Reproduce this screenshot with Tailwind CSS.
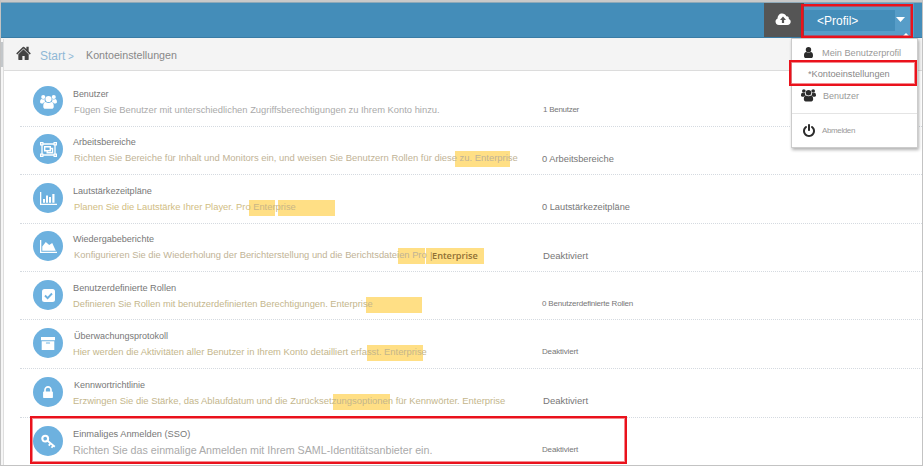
<!DOCTYPE html>
<html lang="de">
<head>
<meta charset="utf-8">
<title>Kontoeinstellungen</title>
<script src="https://cdn.jsdelivr.net/npm/@tailwindcss/browser@4"></script>
</head>
<body class="bg-white font-['Liberation_Sans',Arial,sans-serif]">
<svg class="hidden">
  <symbol id="users" viewBox="0 0 18 16">
    <circle cx="3.4" cy="3.2" r="2.2"/><circle cx="14.6" cy="3.2" r="2.2"/>
    <path d="M0 8.6C0 6 .8 5.2 2 5.2c1 .7 2 .7 3 .2C4.600 6.600 5 7.900 5.600 8.600 4.500 8.700 3.700 9.300 3.200 10H1.500C.5 10 0 9.500 0 8.600zM18 8.600c0-2.600-.8-3.400-2-3.400-1 .7-2 .7-3 .2.4 1.200 0 2.500-.6 3.200 1.100.1 1.900.7 2.400 1.400h1.700c1 0 1.500-.5 1.500-1.400z"/>
    <circle cx="9" cy="5.300" r="3.300"/>
    <path d="M3.400 13.200c0-2.700.8-4.600 2.600-4.600 1.700 1.300 4.300 1.300 6 0 1.800 0 2.600 1.900 2.600 4.600 0 1.500-.9 2.500-2.200 2.500H5.600c-1.300 0-2.200-1-2.200-2.500z"/>
  </symbol>
</svg>
<div class="relative flex h-[466px] w-[923px] flex-col overflow-hidden border border-t-0 border-[#c3c3c3]">
  <div class="h-[3px] shrink-0 border-b border-[#8fa9b8] bg-[#c9c9c9]"></div>
  <header class="flex h-[35px] shrink-0 justify-end border-b border-[#3a7ca5] bg-[#448db9]">
    <div class="flex w-[40px] justify-center bg-[#555] pt-[9px] pr-[2px]">
      <svg class="h-[14px] w-[16px]" viewBox="0 0 16 14"><path fill="#fff" d="M4 13C1.800 13 .5 11.500.5 9.600c0-1.500.9-2.600 2.100-3.100C2.500 3.600 4.500 1.500 7.100 1.500c2 0 3.500 1.100 4.200 2.700 1.700-.3 2.900.9 2.500 2.700 1.200.4 1.900 1.500 1.900 2.800 0 1.900-1.400 3.300-3.200 3.300z"/><path fill="#555" d="M8 4.600l3 3.300H9.100v3H6.900v-3H5z"/></svg>
    </div>
    <div class="flex w-[110px] items-start bg-[#579dc8]">
      <div class="mt-[7px] h-[21px] w-[91px] bg-[#448db9] pl-[13px] text-[12px] leading-[23px] whitespace-nowrap text-white">&lt;Profil&gt;</div>
      <svg class="mt-[14px] ml-[1px] h-[5px] w-[9px] fill-white" viewBox="0 0 9 5"><path d="M0 0h9L4.500 5z"/></svg>
    </div>
    <div class="w-[8px]"></div>
  </header>
  <nav class="flex h-[33px] shrink-0 items-center border-b border-[#dcdcdc] bg-[#f4f4f4] pl-[15px] whitespace-nowrap">
    <svg class="mb-[2px] h-[14px] w-[15px] fill-[#444]" viewBox="60 190 1670 1350" preserveAspectRatio="none"><path d="M1472 992v480q0 26-19 45t-45 19h-384v-384h-256v384h-384q-26 0-45-19t-19-45v-480q0-1 .5-3t.5-3l575-474 575 474q1 2 1 6zm223-69l-62 74q-8 9-21 11h-3q-13 0-21-7l-692-577-692 577q-12 8-24 7-13-2-21-11l-62-74q-8-10-7-23.500t11-21.500l719-599q32-26 76-26t76 26l244 204v-195q0-14 9-23t23-9h192q14 0 23 9t9 23v408l219 182q10 8 11 21.500t-7 23.500z"/></svg>
    <span class="mt-[4px] ml-[9px] w-[28px] text-[12px]">
      <span class="text-[#8fb8d6]">Start</span>
    </span>
    <span class="mt-[4px] w-[18px] text-[10px] text-[#8fb8d6]">&gt;</span>
    <span class="mt-[3px] text-[10.7px] text-[#888]">Kontoeinstellungen</span>
  </nav>

  <main class="ml-[19px] flex flex-col pt-[7px] text-[9px] leading-[12px] whitespace-nowrap text-[#777]">
    <section class="grid h-[49px] grid-cols-[40px_469px_1fr] border-b border-dotted border-[#d5dae0] pl-[13px]">
      <div class="mt-[8px] flex size-[30px] items-center justify-center rounded-full bg-[#6db1df]"><svg class="h-[15px] w-[17px] fill-white"><use href="#users"/></svg></div>
      <div class="pt-[10px]"><h2 class="text-[8.9px]">Benutzer</h2><p class="relative mt-[4px] ml-[1px] text-[9.4px] text-[#aaa]">Fügen Sie Benutzer mit unterschiedlichen Zugriffsberechtigungen zu Ihrem Konto hinzu.</p></div>
      <div class="pt-[26px] pl-[1px] text-[8px] tracking-[-0.27px]">1 Benutzer</div>
    </section>
    <section class="grid h-[48px] grid-cols-[40px_469px_1fr] border-b border-dotted border-[#d5dae0] pl-[13px]">
      <div class="mt-[7px] flex size-[30px] items-center justify-center rounded-full bg-[#6db1df]">
        <svg class="h-[15px] w-[17px]" viewBox="0 0 17 15" fill="none" stroke="#fff"><path stroke-width="1.300" d="M2 2h13v11H2z"/><path stroke-width="1.400" d="M4.700 4.700h5.600v4H4.700zM10.500 6.500h2v4.300H7.200V9"/><path fill="#fff" stroke="none" d="M0 0h3.500v3.500H0zM13.500 0H17v3.500h-3.500zM0 11.500h3.500V15H0zM13.500 11.500H17V15h-3.500z"/><path fill="#6db1df" stroke="none" d="M1.300 1.300h1v1h-1zM14.700 1.300h1v1h-1zM1.300 12.700h1v1h-1zM14.700 12.700h1v1h-1z"/></svg>
      </div>
      <div class="pt-[9px]"><h2 class="text-[9.05px]">Arbeitsbereiche</h2><p class="relative mt-[4px] ml-[1px] text-[9.45px] text-[#bfb396]"><span class="absolute -top-[1px] left-[381px] h-[16px] w-[55px] bg-[#ffdf85]"></span><span class="relative">Richten Sie Bereiche für Inhalt und Monitors ein, und weisen Sie Benutzern Rollen für diese zu. Enterprise</span></p></div>
      <div class="pt-[26px] text-[9.3px]">0 Arbeitsbereiche</div>
    </section>
    <section class="grid h-[49px] grid-cols-[40px_469px_1fr] border-b border-dotted border-[#d5dae0] pl-[13px]">
      <div class="mt-[8px] flex size-[30px] items-center justify-center rounded-full bg-[#6db1df]">
        <svg class="h-[13px] w-[17px] fill-white" viewBox="0 0 17 13"><path d="M0 0h1.300v11.700H17V13H0zM3 7h2v3.700H3zM6 3.500h2v7.200H6zM9 5h2v5.700H9zM12.300 2h2.200v8.700h-2.200z"/></svg>
      </div>
      <div class="pt-[10px]"><h2 class="text-[9.1px]">Lautstärkezeitpläne</h2><p class="relative mt-[4px] ml-[1px] text-[9.35px] text-[#d1bd83]"><span class="absolute -top-[1px] left-[175px] h-[16px] w-[26px] bg-[#ffdf85]"></span><span class="absolute -top-[1px] left-[204px] h-[16px] w-[57px] bg-[#ffdf85]"></span><span class="relative">Planen Sie die Lautstärke Ihrer Player. Pro <span class="text-[#c9b685]">Enterprise</span></span></p></div>
      <div class="pt-[26px] text-[9.25px]">0 Lautstärkezeitpläne</div>
    </section>
    <section class="grid h-[48px] grid-cols-[40px_469px_1fr] border-b border-dotted border-[#d5dae0] pl-[13px]">
      <div class="mt-[7px] flex size-[30px] items-center justify-center rounded-full bg-[#6db1df]">
        <svg class="h-[13px] w-[17px] fill-white" viewBox="0 0 17 13"><path d="M0 0h1.300v11.700H17V13H0zM2.300 10.700V6.500L5.800 2l3.400 3 3-2 3.600 7.700z"/></svg>
      </div>
      <div class="pt-[9px]"><h2 class="text-[9.05px]">Wiedergabeberichte</h2><p class="relative mt-[4px] ml-[1px] text-[9.35px] text-[#bfb396]"><span class="absolute -top-[1px] left-[324px] h-[16px] w-[27px] bg-[#ffdf85]"></span><span class="absolute -top-[1px] left-[352px] h-[16px] w-[58px] bg-[#ffdf85]"></span><span class="relative">Konfigurieren Sie die Wiederholung der Berichterstellung und die Berichtsdateien Pro <span class="absolute top-0 left-[356px] text-[#b09a6a]">|</span><span class="absolute top-0 left-[358px] font-['Open_Sans',sans-serif] text-[9.2px] font-semibold text-[#8f6f35]">Enterprise</span></span></p></div>
      <div class="pt-[26px] pl-[1px] text-[9.55px]">Deaktiviert</div>
    </section>
    <section class="grid h-[48px] grid-cols-[40px_469px_1fr] border-b border-dotted border-[#d5dae0] pl-[13px]">
      <div class="mt-[8px] flex size-[30px] items-center justify-center rounded-full bg-[#6db1df]">
        <svg class="size-[13px]" viewBox="0 0 13 13"><rect width="13" height="13" rx="2.500" fill="#fff"/><path d="M3 6.500l2.600 2.600L10 4.500" fill="none" stroke="#6db1df" stroke-width="1.900"/></svg>
      </div>
      <div class="pt-[10px]"><h2 class="text-[9.2px]">Benutzerdefinierte Rollen</h2><p class="relative mt-[4px] text-[9.3px] text-[#c4b68c]"><span class="absolute -top-[1px] left-[293px] h-[16px] w-[56px] bg-[#ffdf85]"></span><span class="relative">Definieren Sie Rollen mit benutzerdefinierten Berechtigungen. Enterprise</span></p></div>
      <div class="pt-[26px] text-[8px] tracking-[-0.2px]">0 Benutzerdefinierte Rollen</div>
    </section>
    <section class="grid h-[49px] grid-cols-[40px_469px_1fr] border-b border-dotted border-[#d5dae0] pl-[13px]">
      <div class="mt-[8px] flex size-[30px] items-center justify-center rounded-full bg-[#6db1df]">
        <svg class="h-[13px] w-[14px]" viewBox="0 0 14 13"><path fill="#fff" d="M0 0h14v3.300H0zM.7 4.200h12.600V13H.7z"/><path stroke="#6db1df" stroke-width="1.100" stroke-linecap="round" d="M5.400 6h3.200"/></svg>
      </div>
      <div class="pt-[10px]"><h2 class="ml-[1px]">Überwachungsprotokoll</h2><p class="relative mt-[4px] text-[9.4px] text-[#c4b68c]"><span class="absolute -top-[1px] left-[294px] h-[16px] w-[56px] bg-[#ffdf85]"></span><span class="relative">Hier werden die Aktivitäten aller Benutzer in Ihrem Konto detailliert erfasst. Enterprise</span></p></div>
      <div class="pt-[26px] text-[8px] tracking-[-0.16px]">Deaktiviert</div>
    </section>
    <section class="grid h-[49px] grid-cols-[40px_469px_1fr] border-b border-dotted border-[#d5dae0] pl-[13px]">
      <div class="mt-[8px] flex size-[30px] items-center justify-center rounded-full bg-[#6db1df]">
        <svg class="h-[12px] w-[10px] fill-white" viewBox="320 128 1152 1408"><path d="M640 768h512v-192q0-106-75-181t-181-75-181 75-75 181v192zm832 96v576q0 40-28 68t-68 28h-960q-40 0-68-28t-28-68v-576q0-40 28-68t68-28h32v-192q0-184 132-316t316-132 316 132 132 316v192h32q40 0 68 28t28 68z"/></svg>
      </div>
      <div class="pt-[10px]"><h2 class="ml-[1px]">Kennwortrichtlinie</h2><p class="relative mt-[4px] text-[9.45px] text-[#c4b68c]"><span class="absolute -top-[1px] left-[260px] h-[16px] w-[57px] bg-[#ffdf85]"></span><span class="relative">Erzwingen Sie die Stärke, das Ablaufdatum und die Zurücksetzungsoptionen für Kennwörter. Enterprise</span></p></div>
      <div class="pt-[26px] pl-[1px] text-[9.55px]">Deaktiviert</div>
    </section>
    <section class="grid h-[47px] grid-cols-[40px_469px_1fr] pl-[13px]">
      <div class="mt-[8px] flex size-[30px] items-center justify-center rounded-full bg-[#6db1df]">
        <svg class="size-[15px]" viewBox="0 0 15 15" fill="none" stroke="#fff"><circle cx="4.200" cy="4.600" r="2.900" stroke-width="2.100"/><path stroke-width="1.800" d="M6.200 6.500l7.600 6.300M9.600 9.300l-1.800 2.300M12.300 11.500l-1.800 2.300"/></svg>
      </div>
      <div class="pt-[10px]"><h2 class="text-[9.25px]">Einmaliges Anmelden (SSO)</h2><p class="mt-[4px] text-[10.7px] text-[#aaa]">Richten Sie das einmalige Anmelden mit Ihrem SAML-Identitätsanbieter ein.</p></div>
      <div class="pt-[26px] text-[8px] tracking-[-0.16px]">Deaktiviert</div>
    </section>
  </main>

  <!-- left edge of the page behind the panel -->
  <div class="absolute top-[39px] left-0 h-[426px] w-[3px] border-r border-[#dedede] bg-[#f6f6f6]"></div>
  <div class="absolute top-[42px] left-0 h-[25px] w-[2px] bg-[#c3c7ca]"></div>

  <!-- highlight of the single sign-on row -->
  <div class="absolute top-[416px] left-[29px] h-[48px] w-[597px] border-2 border-[#ea121c] shadow-[inset_0_0_0_1px_#ea121c80]"></div>

  <!-- profile menu -->
  <div class="absolute top-[33px] left-[901px] size-0 border-x-[4px] border-b-[4px] border-x-transparent border-b-white"></div>
  <div class="absolute top-[38px] left-[790px] flex h-[110px] w-[127px] flex-col border border-[#ccc] bg-white pt-[4px] text-[9px] leading-[20px] whitespace-nowrap text-[#999] shadow-[1px_2px_3px_rgba(0,0,0,0.3)]">
    <div class="flex h-[21px] items-center pl-[12px]"><svg class="mb-[1px] h-[11px] w-[9px] fill-[#2b2b2b]" viewBox="0 0 9 11"><circle cx="4.500" cy="2.700" r="2.700"/><path d="M0 8.700C0 6.300.8 5 2.300 5c1.400 1 3 1 4.400 0C8.200 5 9 6.300 9 8.700 9 10.200 8.200 11 7.200 11H1.800C.8 11 0 10.200 0 8.700z"/></svg><span class="ml-[9px] text-[9.2px]">Mein Benutzerprofil</span></div>
    <div class="flex h-[21px] items-center pl-[16px]"><span class="text-[9.2px] text-[#888]">*Kontoeinstellungen</span></div>
    <div class="flex h-[30px] shrink-0 items-start border-b border-[#e4e4e4] pt-[2px] pl-[9px]"><svg class="mt-[2px] h-[14px] w-[15px] fill-[#2b2b2b]"><use href="#users"/></svg><span class="ml-[7px]">Benutzer</span></div>
    <div class="flex h-[34px] items-center pl-[11px]"><svg class="mt-[1px] h-[13px] w-[12px] fill-[#2b2b2b]" viewBox="128 0 1536 1664"><path d="M1664 896q0 156-61 298t-164 245-245 164-298 61-298-61-245-164-164-245-61-298q0-182 80.500-343t226.500-270q43-32 95.500-25t83.500 50q32 42 24.500 94.500t-49.500 84.500q-98 74-151.500 181t-53.500 228q0 104 40.500 198.500t109.500 163.500 163.500 109.500 198.500 40.500 198.500-40.500 163.500-109.500 109.500-163.500 40.500-198.500q0-121-53.500-228t-151.500-181q-42-32-49.500-84.500t24.500-94.500q31-43 84-50t95 25q146 109 226.500 270t80.500 343zm-640-768v640q0 52-38 90t-90 38-90-38-38-90v-640q0-52 38-90t90-38 90 38 38 90z"/></svg><span class="mt-[2px] ml-[7px] text-[8px] tracking-[-0.38px]">Abmelden</span></div>
  </div>
  <div class="absolute top-[60px] left-[788px] h-[26px] w-[128px] border-2 border-[#ea121c] shadow-[inset_0_0_0_1px_#ea121c80]"></div>
  <div class="absolute top-[4px] left-[800px] h-[34px] w-[112px] border-2 border-[#ea121c] shadow-[inset_0_0_0_1px_#ea121c80]"></div>
</div>
</body>
</html>
